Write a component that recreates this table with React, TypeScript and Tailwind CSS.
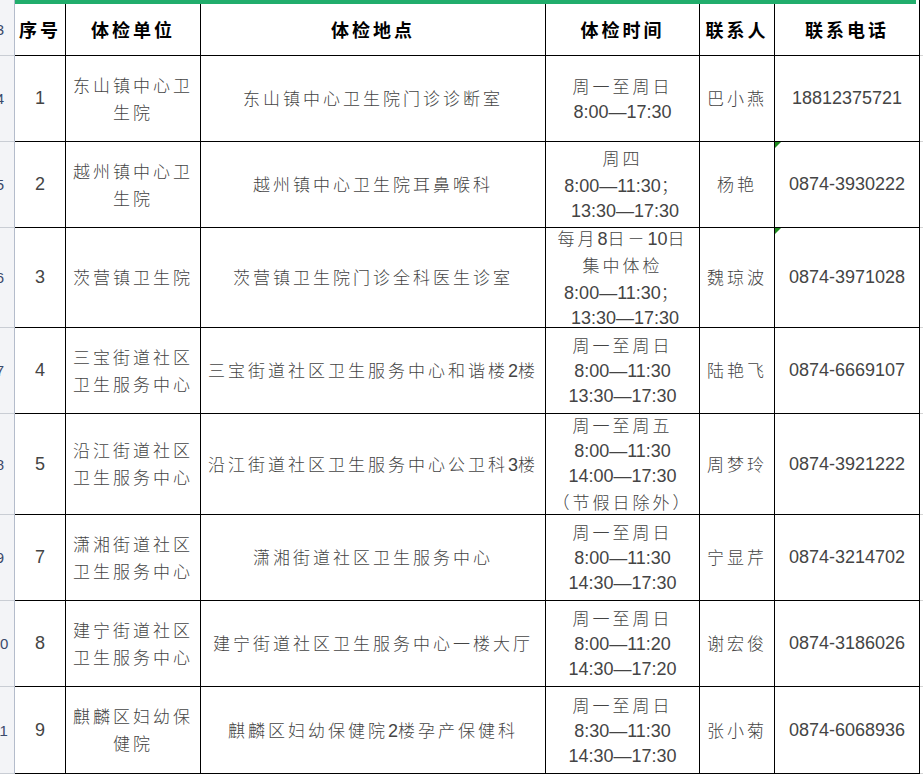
// Spreadsheet crop: 体检单位 / 地点 / 时间 / 联系人 table with a sliver of row headers on the left.

const CJK = /([\u3000-\u303f\u4e00-\u9fff\uff00-\uffef]+)/;

type Row = {
  rn: string;
  no: string;
  unit: string[];
  place: string[];
  time: string[];
  person: string;
  phone: string;
  h: string;
  flag?: boolean;
};

const rows: Row[] = [
  {
    rn: "4",
    no: "1",
    unit: ["东山镇中心卫", "生院"],
    place: ["东山镇中心卫生院门诊诊断室"],
    time: ["周一至周日", "8:00—17:30"],
    person: "巴小燕",
    phone: "18812375721",
    h: "h-[86px]",
  },
  {
    rn: "5",
    no: "2",
    unit: ["越州镇中心卫", "生院"],
    place: ["越州镇中心卫生院耳鼻喉科"],
    time: ["周四", "8:00—11:30；", " 13:30—17:30"],
    person: "杨艳",
    phone: "0874-3930222",
    h: "h-[86px]",
    flag: true,
  },
  {
    rn: "6",
    no: "3",
    unit: ["茨营镇卫生院"],
    place: ["茨营镇卫生院门诊全科医生诊室"],
    time: ["每月8日－10日", "集中体检", "8:00—11:30；", " 13:30—17:30"],
    person: "魏琼波",
    phone: "0874-3971028",
    h: "h-[100px]",
    flag: true,
  },
  {
    rn: "7",
    no: "4",
    unit: ["三宝街道社区", "卫生服务中心"],
    place: ["三宝街道社区卫生服务中心和谐楼2楼"],
    time: ["周一至周日", "8:00—11:30", "13:30—17:30"],
    person: "陆艳飞",
    phone: "0874-6669107",
    h: "h-[86px]",
  },
  {
    rn: "8",
    no: "5",
    unit: ["沿江街道社区", "卫生服务中心"],
    place: ["沿江街道社区卫生服务中心公卫科3楼"],
    time: ["周一至周五", "8:00—11:30", "14:00—17:30", "（节假日除外）"],
    person: "周梦玲",
    phone: "0874-3921222",
    h: "h-[101px]",
  },
  {
    rn: "9",
    no: "7",
    unit: ["潇湘街道社区", "卫生服务中心"],
    place: ["潇湘街道社区卫生服务中心"],
    time: ["周一至周日", "8:00—11:30", "14:30—17:30"],
    person: "宁显芹",
    phone: "0874-3214702",
    h: "h-[86px]",
  },
  {
    rn: "10",
    no: "8",
    unit: ["建宁街道社区", "卫生服务中心"],
    place: ["建宁街道社区卫生服务中心一楼大厅"],
    time: ["周一至周日", "8:00—11:20", "14:30—17:20"],
    person: "谢宏俊",
    phone: "0874-3186026",
    h: "h-[86px]",
  },
  {
    rn: "11",
    no: "9",
    unit: ["麒麟区妇幼保", "健院"],
    place: ["麒麟区妇幼保健院2楼孕产保健科"],
    time: ["周一至周日", "8:30—11:30", "14:30—17:30"],
    person: "张小菊",
    phone: "0874-6068936",
    h: "h-[87px]",
  },
];

// splits a string so CJK runs get their own font + spacing
function T({ text, head }: { text: string; head?: boolean }) {
  const parts = text.split(CJK);
  return (
    <>
      {parts.map((p, i) =>
        i % 2 === 1 ? (
          <span
            key={i}
            className={
              head
                ? "font-['Noto_Sans_CJK_SC',sans-serif] text-[18px] font-bold tracking-[3px]"
                : "font-['Noto_Sans_CJK_SC',sans-serif] text-[17px] font-light tracking-[3px]"
            }
          >
            {p}
          </span>
        ) : (
          <span key={i}>{p}</span>
        )
      )}
    </>
  );
}

function Lines({ lines }: { lines: string[] }) {
  return (
    <div className="flex flex-col items-center">
      {lines.map((l, i) => (
        <div key={i} className="whitespace-pre">
          <T text={l} />
        </div>
      ))}
    </div>
  );
}

// left row-number sliver: only the right edge of the number shows
function RowHead({ n, h }: { n: string; h: string }) {
  return (
    <div
      className={`${h} flex w-[15px] shrink-0 items-center overflow-hidden border-r border-b border-r-[#b4bccb] border-b-[#c9cdd4] bg-[#f3f4f7]`}
    >
      <div className="-ml-[15px] w-[30px] shrink-0 text-center text-[15px] text-[#3b4a6b]">
        {n}
      </div>
    </div>
  );
}

const cell = "flex shrink-0 items-center justify-center border-r border-black text-center";

export default function App() {
  return (
    <div className="h-[775px] w-[923px] overflow-hidden bg-white font-['Liberation_Sans','Noto_Sans_CJK_SC',sans-serif] text-[18px] leading-[25px] text-[#444]">
      {/* selection border along the top */}
      <div className="flex h-[4px]">
        <div className="w-[15px] shrink-0 border-r border-r-[#b4bccb] bg-[#f3f4f7]" />
        <div className="w-[901px] shrink-0 bg-[#21ad6c]" />
        <div className="w-[3px] shrink-0 bg-white" />
        <div className="w-px shrink-0 bg-black" />
        <div className="flex-1 bg-white" />
      </div>

      {/* header */}
      <div className="flex">
        <RowHead n="3" h="h-[52px]" />
        <div className="flex h-[52px] border-b border-black text-black">
          <div className={`${cell} w-[51px]`}><T text="序号" head /></div>
          <div className={`${cell} w-[135px]`}><T text="体检单位" head /></div>
          <div className={`${cell} w-[345px]`}><T text="体检地点" head /></div>
          <div className={`${cell} w-[154px]`}><T text="体检时间" head /></div>
          <div className={`${cell} w-[75px]`}><T text="联系人" head /></div>
          <div className={`${cell} w-[145px]`}><T text="联系电话" head /></div>
        </div>
        <div className="h-[52px] flex-1 border-b border-[#d4d4d4]" />
      </div>

      {rows.map((r) => (
        <div key={r.rn} className="flex">
          <RowHead n={r.rn} h={r.h} />
          <div className={`flex ${r.h} border-b border-black`}>
            <div className={`${cell} w-[51px]`}>{r.no}</div>
            <div className={`${cell} w-[135px]`}><Lines lines={r.unit} /></div>
            <div className={`${cell} w-[345px]`}><Lines lines={r.place} /></div>
            <div className={`${cell} w-[154px]`}><Lines lines={r.time} /></div>
            <div className={`${cell} w-[75px]`}><Lines lines={[r.person]} /></div>
            <div className={`${cell} relative w-[145px]`}>
              {r.flag && (
                <svg className="absolute top-0 left-0" width="6" height="6" viewBox="0 0 6 6">
                  <polygon points="0,0 6,0 0,6" fill="#1e8a1e" />
                </svg>
              )}
              {r.phone}
            </div>
          </div>
          <div className={`${r.h} flex-1 border-b border-[#d4d4d4]`} />
        </div>
      ))}
    </div>
  );
}
